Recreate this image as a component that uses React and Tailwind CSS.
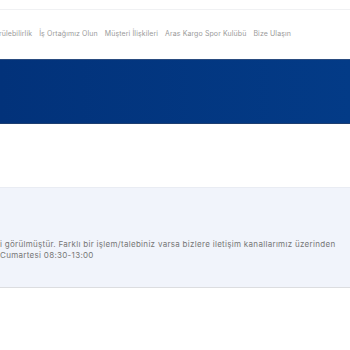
export default function App() {
  const navItems = ['Sürdürülebilirlik', 'İş Ortağımız Olun', 'Müşteri İlişkileri', 'Aras Kargo Spor Kulübü', 'Bize Ulaşın'];

  return (
    <div className="w-[350px] h-[350px] overflow-hidden bg-white" style={{ fontFamily: 'Inter, "Open Sans", sans-serif' }}>
      <div className="h-[10px] border-b border-[#f0f1f3]" />
      <nav className="h-[49px] flex items-center justify-end pr-[59px] gap-[7px] whitespace-nowrap overflow-hidden">
        {navItems.map((item) => (
          <span key={item} className="text-[7px] tracking-[0.1px] text-[#9a9a9a]">{item}</span>
        ))}
      </nav>
      <div className="h-[65px] bg-gradient-to-r from-[#02327a] to-[#033b87] border-t border-[#2a4c80] border-b border-b-[#1d3e70]" />
      <div className="h-[63px]" />
      <section className="h-[101px] bg-[#f1f4fb] border-t border-[#e9ecf3] border-b border-b-[#dcdde0] flex flex-col justify-end pb-[26px] overflow-hidden">
        <p className="whitespace-nowrap text-[8px] tracking-[0.3px] leading-[11px] text-[#767676]">
          i görülmüştür. Farklı bir işlem/talebiniz varsa bizlere iletişim kanallarımız üzerinden
        </p>
        <p className="whitespace-nowrap text-[8px] tracking-[0.3px] leading-[11px] text-[#767676]">
          Cumartesi 08:30-13:00
        </p>
      </section>
    </div>
  );
}
